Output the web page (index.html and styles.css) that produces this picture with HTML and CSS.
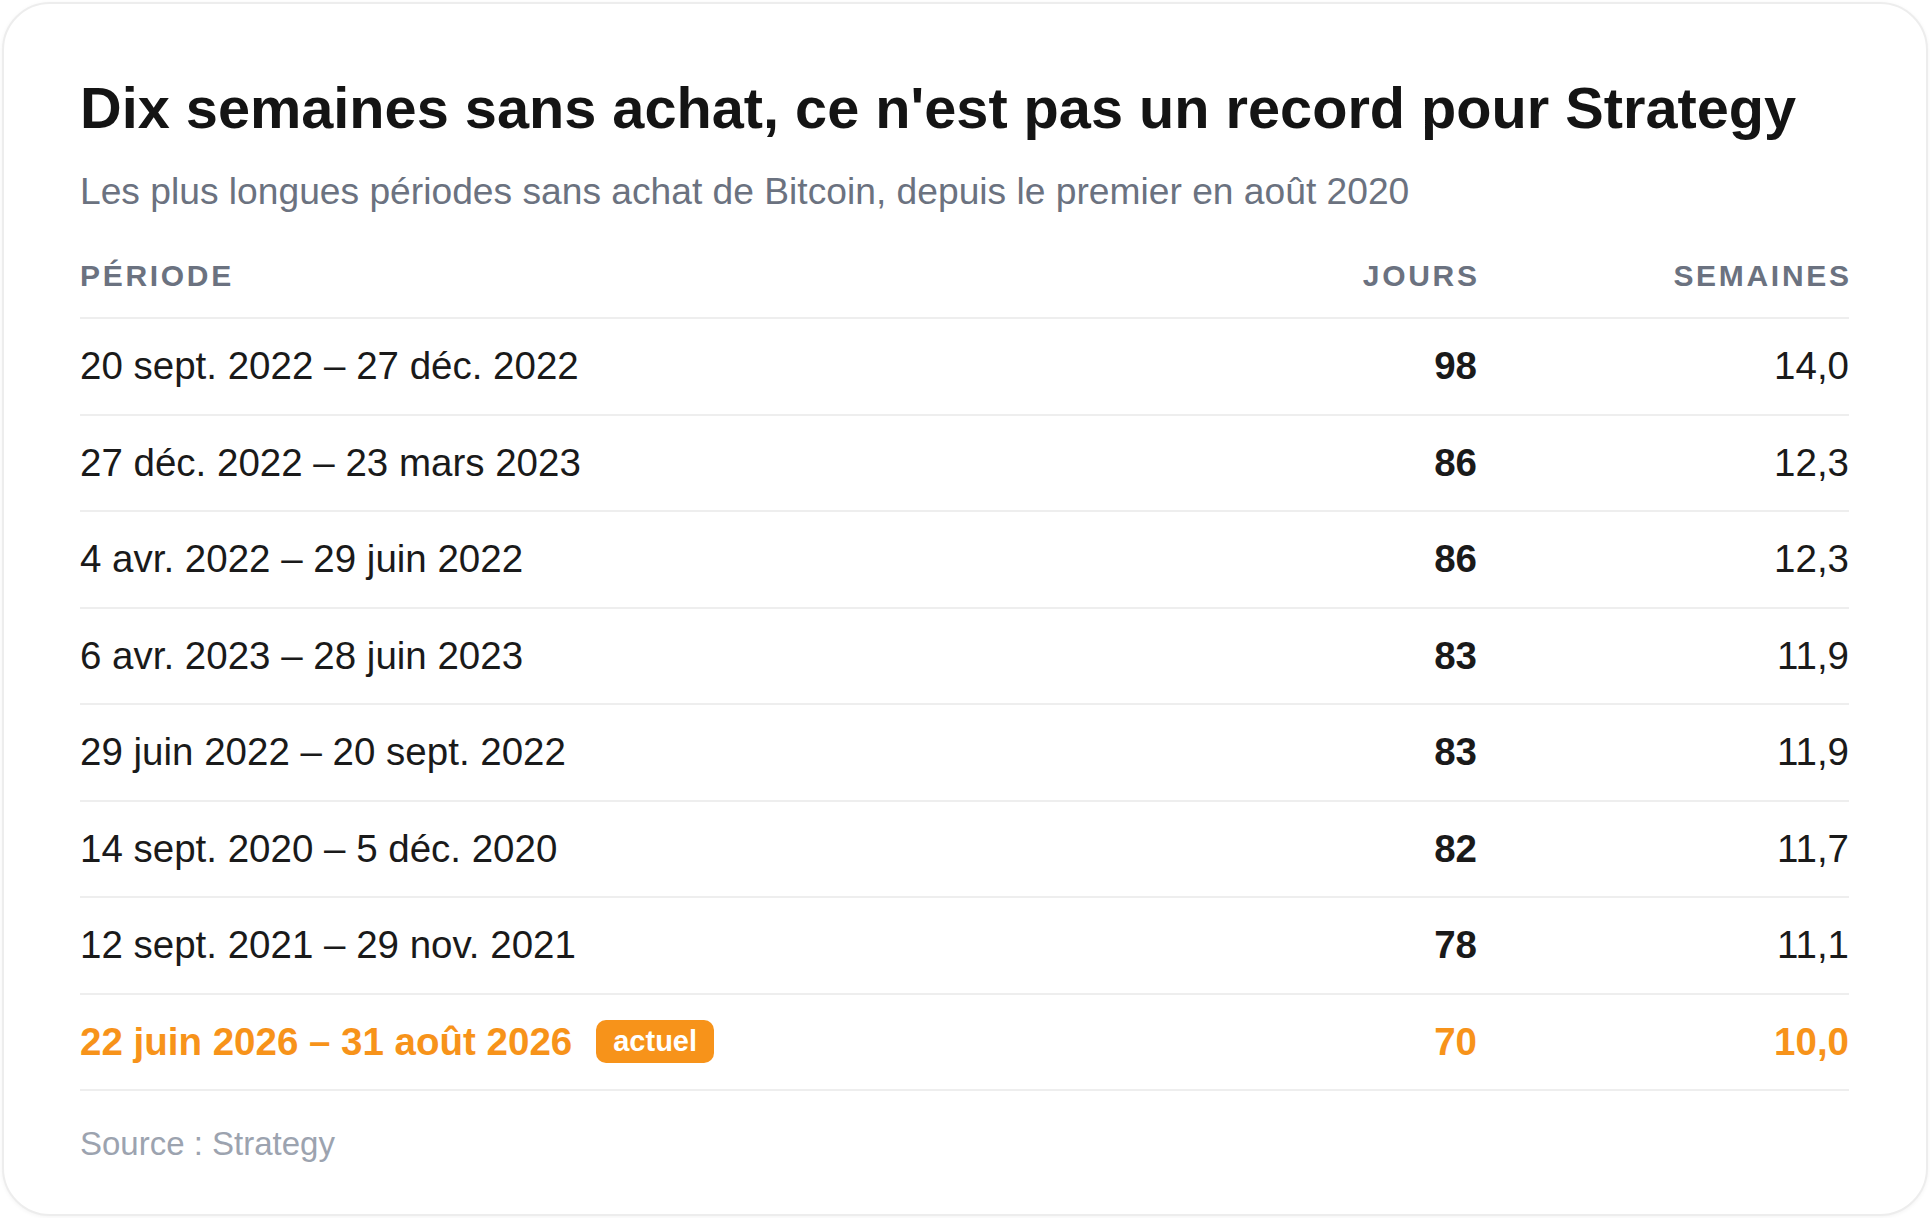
FILE: index.html
```html
<!DOCTYPE html>
<html lang="fr">
<head>
<meta charset="utf-8">
<title>Dix semaines sans achat</title>
<link rel="stylesheet" href="styles.css">
</head>
<body>
<div class="card">
  <h1 class="title">Dix semaines sans achat, ce n'est pas un record pour Strategy</h1>
  <p class="subtitle">Les plus longues périodes sans achat de Bitcoin, depuis le premier en août 2020</p>
  <div class="table">
    <div class="row head">
      <div class="c-period">Période</div>
      <div class="c-num">Jours</div>
      <div class="c-num">Semaines</div>
    </div>
    <div class="row">
      <div class="c-period">20 sept. 2022 – 27 déc. 2022</div>
      <div class="c-num days">98</div>
      <div class="c-num">14,0</div>
    </div>
    <div class="row">
      <div class="c-period">27 déc. 2022 – 23 mars 2023</div>
      <div class="c-num days">86</div>
      <div class="c-num">12,3</div>
    </div>
    <div class="row">
      <div class="c-period">4 avr. 2022 – 29 juin 2022</div>
      <div class="c-num days">86</div>
      <div class="c-num">12,3</div>
    </div>
    <div class="row">
      <div class="c-period">6 avr. 2023 – 28 juin 2023</div>
      <div class="c-num days">83</div>
      <div class="c-num">11,9</div>
    </div>
    <div class="row">
      <div class="c-period">29 juin 2022 – 20 sept. 2022</div>
      <div class="c-num days">83</div>
      <div class="c-num">11,9</div>
    </div>
    <div class="row">
      <div class="c-period">14 sept. 2020 – 5 déc. 2020</div>
      <div class="c-num days">82</div>
      <div class="c-num">11,7</div>
    </div>
    <div class="row">
      <div class="c-period">12 sept. 2021 – 29 nov. 2021</div>
      <div class="c-num days">78</div>
      <div class="c-num">11,1</div>
    </div>
    <div class="row current">
      <div class="c-period">22 juin 2026 – 31 août 2026<span class="badge">actuel</span></div>
      <div class="c-num days">70</div>
      <div class="c-num">10,0</div>
    </div>
  </div>
  <p class="source">Source : Strategy</p>
</div>
</body>
</html>
```

FILE: styles.css
```css
html, body {
  margin: 0;
  padding: 0;
  background: #ffffff;
}
body {
  padding: 2px;
  font-family: "Liberation Sans", Arial, sans-serif;
  color: #1a1a1a;
}
.card {
  box-sizing: border-box;
  width: 1926px;
  border: 2px solid #ededed;
  border-radius: 48px;
  background: #ffffff;
  box-shadow: 0 1px 4px rgba(0, 0, 0, 0.05);
  padding: 71px 77px 50px 76px;
}
.title {
  margin: 0;
  font-size: 57.7px;
  line-height: 67px;
  font-weight: 700;
  color: #141414;
}
.subtitle {
  margin: 25px 0 0 0;
  font-size: 37.2px;
  line-height: 48px;
  color: #6b7280;
}
.table {
  margin-top: 43px;
}
.row {
  display: grid;
  grid-template-columns: 1fr 300px 372px;
  align-items: center;
  border-bottom: 2px solid #eeeeee;
  padding: 25px 0;
  font-size: 38.5px;
  line-height: 44.5px;
}
.row.head {
  padding: 0 0 23px 0;
  font-size: 30px;
  line-height: 36px;
  font-weight: 700;
  letter-spacing: 0.09em;
  text-transform: uppercase;
  color: #6b7280;
}
.row.head .c-num {
  margin-right: -0.09em;
}
.c-period {
  display: flex;
  align-items: center;
}
.c-num {
  text-align: right;
}
.days {
  font-weight: 700;
}
.row.current {
  color: #f7931a;
  font-weight: 700;
}
.badge {
  display: inline-block;
  margin-left: 24px;
  padding: 0 17px;
  height: 43px;
  line-height: 43px;
  border-radius: 10px;
  background: #f7931a;
  color: #ffffff;
  font-size: 29px;
  font-weight: 700;
}
.source {
  margin: 33px 0 0 0;
  font-size: 33px;
  line-height: 40px;
  color: #9ca3af;
}
```
